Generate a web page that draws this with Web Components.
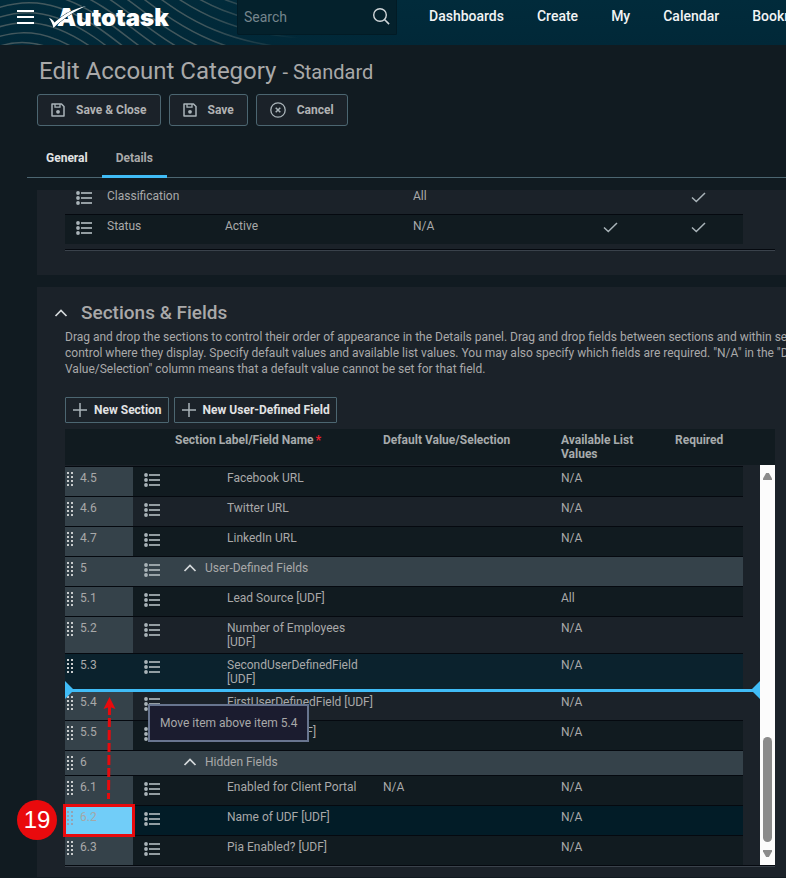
<!DOCTYPE html>
<html lang="en">
<head>
<meta charset="utf-8">
<meta name="viewport" content="width=device-width, initial-scale=1">
<title>Edit Account Category - Standard</title>
<style>
  :root {
    --bg: #111b21;
    --panel: #1b2229;
    --row: #111b20;
    --raised: #35424a;
    --text: #a9a9a9;
    --bright: #e2e3e4;
    --line: #4c6671;
    --black: #05090f;
    --accent: #40bcf6;
    --icon: #aab4b9;
    --red: #e90a0d;
  }
  html { overflow-x: hidden; background: var(--bg); }
  body {
    margin: 0;
    overflow-x: hidden;
    background: var(--bg);
    color: var(--text);
    font: 12px/14px Roboto, "Liberation Sans", sans-serif;
  }
</style>
</head>
<body>
<category-page></category-page>

<script>
const define = (name, html, setup) => {
  const template = document.createElement('template');
  template.innerHTML = html;
  customElements.define(name, class extends HTMLElement {
    constructor() {
      super();
      this.attachShadow({ mode: 'open' }).append(template.content.cloneNode(true));
    }
    connectedCallback() { if (setup) setup(this, this.shadowRoot); }
  });
};

/* Icons: [width, height, markup] */
const ICONS = {
  menu: [17, 14, '<path d="M0 1h17M0 7h17M0 13h17" stroke="#fff" stroke-width="2"/>'],
  search: [18, 18, '<circle cx="8" cy="7" r="6.300" fill="none" stroke="currentColor" stroke-width="1.4"/><path d="M12.500 11.500l4.600 4.600" stroke="currentColor" stroke-width="1.6"/>'],
  save: [14, 14, '<path d="M1 1h9.500L13 3.500V13H1z" fill="none" stroke="currentColor" stroke-width="1.500" stroke-linejoin="round"/><path d="M4 1v3.200h5V1" fill="none" stroke="currentColor" stroke-width="1.300"/><circle cx="7" cy="8.800" r="1.900" fill="currentColor"/>'],
  cancel: [16, 16, '<circle cx="8" cy="8" r="7.200" fill="none" stroke="currentColor" stroke-width="1.300"/><path d="M5.700 5.700l4.600 4.600M10.300 5.700l-4.600 4.600" stroke="currentColor" stroke-width="1.500"/>'],
  list: [16, 14, '<g fill="currentColor"><circle cx="2" cy="2" r="1.900"/><circle cx="2" cy="7" r="1.900"/><circle cx="2" cy="12" r="1.900"/><path d="M5 1h11v2H5zM5 6h11v2H5zM5 11h11v2H5z" opacity=".85"/></g>'],
  check: [15, 11, '<path d="M1 5.500l4.300 4L14 1" fill="none" stroke="currentColor" stroke-width="1.500"/>'],
  up: [13, 8, '<path d="M.5 7L6 1.500 11.500 7" fill="none" stroke="#d5d9db" stroke-width="1.700"/>'],
  plus: [14, 14, '<path d="M7 0v14M0 7h14" stroke="currentColor" stroke-width="1.500"/>'],
  grip: [6, 14, '<path d="M0 0h2v2H0zM4 0h2v2H4zM0 4h2v2H0zM4 4h2v2H4zM0 8h2v2H0zM4 8h2v2H4zM0 12h2v2H0zM4 12h2v2H4z" fill="currentColor"/>'],
  logo: [38, 24, '<path d="M0 12c2 .5 4 2 5.500 4.500C14 9 24 3 37 0 24 6 13 13 4.500 22 3.500 18 2 14.500 0 12z" fill="#fff" stroke="#012b3b" stroke-width="1" paint-order="stroke"/>']
};
customElements.define('x-icon', class extends HTMLElement {
  constructor() { super(); this.attachShadow({ mode: 'open' }); }
  connectedCallback() {
    const [w, h, body] = ICONS[this.getAttribute('name')];
    this.shadowRoot.innerHTML = `<style>:host{display:inline-block;flex:none;color:var(--icon)}svg{display:block;overflow:visible}</style>
      <svg width="${w}" height="${h}" viewBox="0 0 ${w} ${h}" aria-hidden="true">${body}</svg>`;
  }
});

define('brand-logo', `<style>
    :host { display: block; position: relative; color: #fff; font: 900 24px/24px Inter, sans-serif; padding-left: 8px; }
    x-icon { position: absolute; left: 0; top: 0; }
  </style><span>Autotask</span><x-icon name="logo"></x-icon>`);

define('app-header', `<style>
    :host { display: flex; align-items: flex-start; height: 45px; position: relative; overflow: hidden;
      background: linear-gradient(#012b3b, #012838); }
    .waves { position: absolute; left: 0; top: 0; -webkit-mask: linear-gradient(90deg, #000 50%, transparent 75%); mask: linear-gradient(90deg, #000 50%, transparent 75%); }
    button { position: relative; display: block; border: 0; background: none; padding: 10px 17px; width: 49px; box-sizing: border-box; flex: none; }
    brand-logo { margin-top: 6px; width: 188px; box-sizing: border-box; flex: none; }
    form { position: relative; margin: 0; display: flex; align-items: center; height: 35px; width: 160px; box-sizing: border-box; padding: 0 6px;
      background: #04212c; border: 1px solid #021b25; border-top: 0; flex: none; border-radius: 0 0 2px 2px; }
    input { flex: 1; min-width: 0; border: 0; padding: 0; background: none; color: inherit; font: 14px/16px Roboto, sans-serif; outline: 0; }
    input::placeholder { color: #75858c; opacity: 1; }
    form x-icon { color: #d0d6d9; }
    nav { display: flex; gap: 33px; margin-left: 32px; padding-top: 8px; flex: none; }
    a { color: #f2f4f5; text-decoration: none; font: 500 14px/16px Roboto, sans-serif; white-space: nowrap; }
  </style>
  <svg class="waves" width="400" height="45" fill="none" stroke="#a09890" stroke-width="1.500" aria-hidden="true"></svg>
  <button aria-label="Menu"><x-icon name="menu"></x-icon></button>
  <brand-logo></brand-logo>
  <form role="search"><input type="search" placeholder="Search" aria-label="Search"><x-icon name="search"></x-icon></form>
  <nav><a href="#">Dashboards</a><a href="#">Create</a><a href="#">My</a><a href="#">Calendar</a><a href="#">Bookmarks</a></nav>`,
  (el, root) => {
    let d = '';
    for (let i = 0; i < 14; i++) {
      const y = 42 - i * 10;
      d += `<path d="M-20 ${y + 13}C${12 + i * 2} ${y - 6} ${45 + i * 2} ${y - 4} ${85 + i * 3} ${y + 25}S${170 + i * 3} ${y + 108} ${300 + i * 3} ${y + 118 - i}" stroke-opacity=".42"/>`;
    }
    root.querySelector('.waves').innerHTML = d;
  });

define('action-button', `<style>
    :host { display: block; flex: none; }
    button { display: flex; align-items: center; gap: 11px; height: 32px; padding: 0 13px; border: 1px solid var(--line);
      border-radius: 3px; background: var(--panel); color: #b1b2b3; font: 700 12px/14px Roboto, sans-serif; white-space: nowrap; }
    :host([compact]) button { height: 26px; padding: 0 6px 0 7px; gap: 7px; border-radius: 1px; color: var(--bright); }
  </style><button type="button"><slot name="icon"></slot><slot></slot></button>`);

define('tab-bar', `<style>
    :host { display: block; margin: 12px 0 0 27px; border-bottom: 1px solid var(--line); height: 39px; }
    button { border: 0; background: none; padding: 2px 14px 0; font: 700 12px/14px Roboto, sans-serif; color: var(--text);
      border-bottom: 3px solid transparent; height: 40px; }
    div { display: flex; }
    button:first-child { color: var(--bright); padding-left: 19px; }
    button[aria-selected=true] { border-color: var(--accent); }
  </style><div role="tablist"><button role="tab" aria-selected="false">General</button><button role="tab" aria-selected="true">Details</button></div>`);

define('content-panel', `<style>
    :host { display: block; background: var(--panel); margin-left: 37px; padding: 0 11px 0 28px; }
  </style><slot></slot>`);

const tableCss = `
  table { width: 100%; border-spacing: 0; table-layout: fixed; }
  td, th { padding: 4px 8px 4px 0; vertical-align: top; text-align: left; }
  td { border-top: 1px solid var(--black); box-sizing: border-box; }
  td x-icon { display: block; }`;

define('summary-table', `<style>${tableCss}
    :host { display: block; padding: 0 0 6px; border-bottom: 1px solid #3a424b; box-shadow: inset 0 -1px var(--black); }
    table { width: calc(100% - 32px); }
    td { height: 30px; padding-right: 0; }
    tr:first-child td { height: 24px; border: 0; padding-top: 0; padding-bottom: 0; line-height: 12px; }
    tr:last-child { background: var(--row); }
    td:first-child { padding-left: 11px; padding-top: 6px; }
    tr:first-child td:first-child { padding-top: 1px; }
    td.c { padding-top: 7px; padding-left: 17px; }
    tr:first-child td.c { padding-top: 2px; }
  </style>
  <table>
    <colgroup><col style="width:42px"><col style="width:118px"><col><col style="width:173px"><col style="width:88px"><col style="width:69px"></colgroup>
    <tr><td><x-icon name="list"></x-icon></td><td>Classification</td><td></td><td>All</td><td></td><td class="c"><x-icon name="check"></x-icon></td></tr>
    <tr><td><x-icon name="list"></x-icon></td><td>Status</td><td>Active</td><td>N/A</td><td class="c"><x-icon name="check"></x-icon></td><td class="c"><x-icon name="check"></x-icon></td></tr>
  </table>`);

define('scroll-track', `<style>
    :host { display: flex; flex-direction: column; align-items: center; width: 15px; background: #fcfcfc; padding: 8px 0; box-sizing: border-box; flex: none; }
    i { display: block; background: #8b8b8b; }
    .up { width: 9px; height: 7px; clip-path: polygon(35% 0, 65% 0, 100% 80%, 100% 100%, 0 100%, 0 80%); }
    .down { width: 9px; height: 7px; clip-path: polygon(35% 100%, 65% 100%, 100% 20%, 100% 0, 0 0, 0 20%); margin-top: 8px; }
    .thumb { width: 9px; height: 105px; border-radius: 5px; margin-top: auto; }
  </style><i class="up"></i><i class="thumb"></i><i class="down"></i>`);

define('drop-marker', `<style>
    :host { display: block; height: 3px; background: var(--accent); }
    :host::before, :host::after { content: ""; position: absolute; top: -8px; width: 9px; height: 18px; background: var(--accent); }
    :host::before { left: 0; clip-path: polygon(0 0, 100% 50%, 0 100%); }
    :host::after { right: 0; clip-path: polygon(100% 0, 0 50%, 100% 100%); }
  </style>`);

define('hint-tip', `<style>
    :host { display: block; padding: 10px; border: 2px solid #68758f; background: #1b1c2f; white-space: nowrap; }
  </style><slot></slot>`);

define('step-badge', `<style>
    :host { display: grid; place-items: center; width: 40px; height: 40px; border-radius: 50%; background: var(--red); color: #fff;
      font: 24px/40px "Liberation Sans", Arial, sans-serif; }
  </style><slot></slot>`);

const ROWS = [
  ['4.5', 'Facebook URL', '', 'N/A', 'dark'],
  ['4.6', 'Twitter URL', '', 'N/A', ''],
  ['4.7', 'LinkedIn URL', '', 'N/A', 'dark'],
  ['5', 'User-Defined Fields', '', '', 'group'],
  ['5.1', 'Lead Source [UDF]', '', 'All', 'dark'],
  ['5.2', 'Number of Employees [UDF]', '', 'N/A', ''],
  ['5.3', 'SecondUserDefinedField [UDF]', '', 'N/A', 'hover'],
  ['5.4', 'FirstUserDefinedField [UDF]', '', 'N/A', ''],
  ['5.5', 'Text Fields [UDF]', '', 'N/A', 'dark'],
  ['6', 'Hidden Fields', '', '', 'group bare'],
  ['6.1', 'Enabled for Client Portal', 'N/A', 'N/A', 'dark'],
  ['6.2', 'Name of UDF [UDF]', '', 'N/A', 'drag'],
  ['6.3', 'Pia Enabled? [UDF]', '', 'N/A', 'dark']
];

define('field-table', `<style>${tableCss}
    :host { display: block; border-bottom: 1px solid #3a424b; }
    .head { background: var(--row); }
    .head table { width: calc(100% - 32px); }
    .head tr { height: 36px; }
    th { font-weight: 700; color: #a7abac; }
    th b { color: #e8202c; padding-left: 2px; }
    .scroll { position: relative; display: flex; }
    .rows { flex: 1; padding-top: 1px; min-width: 0; }
    .rows table { width: calc(100% - 17px); }
    .rows tr { height: 30px; }
    .rows .bare { height: 25px; }
    .foot { height: 1px; background: var(--black); }
    .dark { background: var(--row); }
    .group { background: var(--raised); }
    .hover { background: #0b222d; }
    .drag { background: #021c27; }
    .rows td:first-child { background: var(--raised); padding-left: 2px; padding-right: 0; }
    .rows .hover td:first-child { background: none; }
    .num { display: flex; gap: 7px; }
    .num x-icon { padding-top: 1px; color: #c9cccd; }
    .rows .drag td:first-child { background: #71cdf8; color: #a3a8a8; }
    .drag .num x-icon { color: #93a3b5; }
    .rows td:nth-child(2) { padding: 6px 0 0 11px; }
    td.name { padding-left: 52px; }
    .group td.name { padding-left: 9px; }
    .title { display: flex; gap: 8px; white-space: nowrap; }
    .title x-icon { padding-top: 3px; }
    drop-marker { position: absolute; left: 0; right: 15px; top: 224px; }
    hint-tip { position: absolute; left: 83px; top: 239px; }
    .arrow { position: absolute; left: 38px; top: 232px; }
    .frame { position: absolute; left: -2px; top: 339px; width: 72px; height: 33px; box-sizing: border-box; border: 3px solid var(--red); }
    step-badge { position: absolute; left: -48px; top: 335px; }
  </style>
  <div class="head"><table>
    <colgroup><col style="width:110px"><col style="width:208px"><col><col style="width:114px"><col style="width:68px"></colgroup>
    <tr><th></th><th>Section Label/Field Name<b>*</b></th><th>Default Value/Selection</th><th>Available List Values</th><th>Required</th></tr>
  </table></div>
  <div class="scroll">
    <div class="rows"><table>
      <colgroup><col style="width:68px"><col style="width:42px"><col style="width:208px"><col><col style="width:114px"><col style="width:68px"></colgroup>
      <tbody></tbody>
    </table></div>
    <scroll-track></scroll-track>
    <drop-marker></drop-marker>
    <svg class="arrow" width="14" height="102" viewBox="0 0 14 102" aria-hidden="true">
      <path d="M6.500 0L12.500 12 6.500 10 .5 12z" fill="#e90a0d"/>
      <path d="M6.500 8L5.500 102" stroke="#e90a0d" stroke-width="3" stroke-dasharray="10 3 9 3"/>
    </svg>
    <hint-tip role="tooltip">Move item above item 5.4</hint-tip>
    <div class="frame"></div>
    <step-badge>19</step-badge>
  </div>
  <div class="foot"></div>`,
  (el, root) => {
    root.querySelector('.rows tbody').innerHTML = ROWS.map(([n, name, def, vals, kind]) => `
      <tr class="${kind}">
        <td><div class="num"><x-icon name="grip"></x-icon><span>${n}</span></div></td>
        <td>${kind.includes('bare') ? '' : '<x-icon name="list"></x-icon>'}</td>
        <td class="name">${kind.includes('group') ? `<div class="title"><x-icon name="up"></x-icon><span>${name}</span></div>` : name}</td>
        <td>${def}</td><td>${vals}</td><td></td>
      </tr>`).join('');
  });

define('category-page', `<style>
    :host { display: block; }
    h1 { margin: 0; padding: 12px 0 0 39px; font: 24px/28px Roboto, sans-serif; white-space: nowrap; }
    h1 small { font-size: 20px; }
    .actions { display: flex; gap: 8px; padding: 8px 0 0 37px; }
    tab-bar { margin-bottom: 12px; }
    .status { padding-bottom: 24px; }
    .fields { margin-top: 12px; padding-top: 16px; padding-bottom: 10px; }
    h2 { display: flex; align-items: center; gap: 13px; margin: 0 0 0 -10px; font: 500 19px/20px Roboto, sans-serif; }
    p { margin: 6px 0 20px; line-height: 16px; white-space: nowrap; }
    .add { display: flex; gap: 5px; margin-bottom: 6px; }
  </style>
  <app-header></app-header>
  <main>
    <h1>Edit Account Category <small>- Standard</small></h1>
    <div class="actions">
      <action-button><x-icon slot="icon" name="save"></x-icon>Save &amp; Close</action-button>
      <action-button><x-icon slot="icon" name="save"></x-icon>Save</action-button>
      <action-button><x-icon slot="icon" name="cancel"></x-icon>Cancel</action-button>
    </div>
    <tab-bar></tab-bar>
    <content-panel class="status"><summary-table></summary-table></content-panel>
    <content-panel class="fields">
      <h2><x-icon name="up"></x-icon>Sections &amp; Fields</h2>
      <p>Drag and drop the sections to control their order of appearance in the Details panel. Drag and drop fields between sections and within sections to<br>control where they display. Specify default values and available list values. You may also specify which fields are required. "N/A" in the "Default<br>Value/Selection" column means that a default value cannot be set for that field.</p>
      <div class="add">
        <action-button compact><x-icon slot="icon" name="plus"></x-icon>New Section</action-button>
        <action-button compact><x-icon slot="icon" name="plus"></x-icon>New User-Defined Field</action-button>
      </div>
      <field-table></field-table>
    </content-panel>
  </main>`);
</script>
</body>
</html>
